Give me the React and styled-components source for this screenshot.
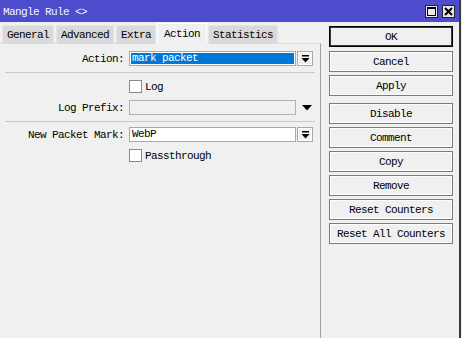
import React from "react";
import styled, { createGlobalStyle } from "styled-components";

const Global = createGlobalStyle`
  html, body {
    margin: 0;
    padding: 0;
    background: #f0f0f0;
  }
  body {
    font-family: "Liberation Mono", "DejaVu Sans Mono", monospace;
    font-size: 11px;
    letter-spacing: -0.6px;
    color: #000;
  }
`;

const Window = styled.div`
  width: 459px;
  height: 338px;
  border-right: 2px solid #3a3a3a;
  background: #f0f0f0;
  display: flex;
  flex-direction: column;
  box-sizing: content-box;
`;

const TitleBar = styled.div`
  height: 22px;
  background: #4c4ccc;
  color: #f4f4ff;
  display: flex;
  align-items: center;
  padding: 0 4px 0 3px;
  gap: 4px;
`;

const Title = styled.div`
  flex: 1;
  padding-top: 1px;
`;

const TitleButton = styled.div`
  width: 13px;
  height: 13px;
  background: #e8e8e8;
  border: 1px solid #222;
  display: flex;
  align-items: center;
  justify-content: center;
  box-sizing: border-box;
`;

const Body = styled.div`
  flex: 1;
  display: flex;
`;

const LeftPane = styled.div`
  width: 321px;
  display: flex;
  flex-direction: column;
`;

const TabBar = styled.div`
  height: 21px;
  display: flex;
  align-items: flex-end;
  gap: 2px;
  padding-left: 2px;
`;

const Tab = styled.div`
  height: ${(p) => (p.$active ? 21 : 18)}px;
  padding: 0 ${(p) => (p.$active ? 6 : 4)}px;
  margin: 0 ${(p) => (p.$active ? -1 : 0)}px ${(p) => (p.$active ? -1 : 0)}px;
  background: ${(p) => (p.$active ? "#f0f0f0" : "#d9d9d9")};
  border: 1px solid ${(p) => (p.$active ? "#fff" : "#e6e6e6")};
  border-bottom: none;
  box-sizing: border-box;
  display: flex;
  align-items: center;
  position: relative;
  z-index: ${(p) => (p.$active ? 1 : 0)};
  white-space: nowrap;
`;

const Panel = styled.div`
  flex: 1;
  border-top: 1px solid #dcdcdc;
  border-right: 1px solid #a0a0a0;
  padding-top: 7px;
  display: flex;
  flex-direction: column;
`;

const Row = styled.div`
  display: flex;
  align-items: center;
  height: ${(p) => p.$h || 15}px;
  margin-top: ${(p) => p.$top || 0}px;
`;

const Label = styled.div`
  width: 129px;
  text-align: right;
  padding-right: 5px;
  box-sizing: border-box;
`;

const Spacer = styled.div`
  width: 129px;
`;

const Field = styled.div`
  width: 167px;
  height: 15px;
  box-sizing: border-box;
  border: 1px solid ${(p) => (p.$disabled ? "#b0b0b0" : "#a8a8a8")};
  background: ${(p) => (p.$disabled ? "#f0f0f0" : "#fff")};
  padding: 0 2px;
  display: flex;
  align-items: center;
  line-height: 13px;
`;

const SelectedField = styled(Field)`
  padding: 1px;
`;

const Selection = styled.div`
  flex: 1;
  height: 100%;
  background: #0078d7;
  color: #fff;
  padding-left: 1px;
  line-height: 11px;
`;

const DropButton = styled.div`
  width: 16px;
  height: 15px;
  margin-left: 1px;
  box-sizing: border-box;
  border: 1px solid #a8a8a8;
  box-shadow: inset 0 0 0 1px #fff;
  background: #f0f0f0;
  display: flex;
  align-items: center;
  justify-content: center;
`;

const PlainArrow = styled.div`
  width: 16px;
  margin-left: 3px;
  display: flex;
  justify-content: center;
`;

const Separator = styled.div`
  height: 1px;
  margin: ${(p) => p.$top}px 5px 0;
  background: #c8c8c8;
`;

const Check = styled.div`
  width: 13px;
  height: 13px;
  box-sizing: border-box;
  border: 1px solid #8a8a8a;
  background: #fff;
  margin-right: 3px;
`;

const RightPane = styled.div`
  flex: 1;
  padding: 4px 0 0 8px;
  display: flex;
  flex-direction: column;
`;

const Button = styled.div`
  width: 124px;
  height: 21px;
  box-sizing: border-box;
  border: 1px solid ${(p) => (p.$primary ? "#000" : "#7a7a7a")};
  box-shadow: inset 0 0 0 1px ${(p) => (p.$primary ? "#3a3a3a" : "#fdfdfd")};
  background: #f0f0f0;
  display: flex;
  align-items: center;
  justify-content: center;
  margin-top: ${(p) => p.$top || 0}px;
`;

const DropIcon = () => (
  <svg width="9" height="8" viewBox="0 0 9 8">
    <rect x="1" y="0" width="7" height="1.5" fill="#000" />
    <path d="M0.5 3 H8.5 L4.5 7.5 Z" fill="#000" />
  </svg>
);

const Triangle = () => (
  <svg width="10" height="6" viewBox="0 0 10 6">
    <path d="M0 0 H10 L5 5.5 Z" fill="#000" />
  </svg>
);

const buttons = [
  ["OK", 0, true],
  ["Cancel", 4],
  ["Apply", 3],
  ["Disable", 7],
  ["Comment", 3],
  ["Copy", 3],
  ["Remove", 3],
  ["Reset Counters", 3],
  ["Reset All Counters", 3],
];

export default function App() {
  return (
    <>
      <Global />
      <Window>
        <TitleBar>
          <Title>Mangle Rule &lt;&gt;</Title>
          <TitleButton>
            <svg width="9" height="9" viewBox="0 0 9 9">
              <rect x="0.5" y="0.5" width="8" height="8" fill="none" stroke="#000" />
              <rect x="0" y="0" width="9" height="2" fill="#000" />
            </svg>
          </TitleButton>
          <TitleButton>
            <svg width="9" height="9" viewBox="0 0 9 9">
              <path d="M1 1 L8 8 M8 1 L1 8" stroke="#000" strokeWidth="2" />
            </svg>
          </TitleButton>
        </TitleBar>
        <Body>
          <LeftPane>
            <TabBar>
              <Tab>General</Tab>
              <Tab>Advanced</Tab>
              <Tab>Extra</Tab>
              <Tab $active>Action</Tab>
              <Tab>Statistics</Tab>
            </TabBar>
            <Panel>
              <Row>
                <Label>Action:</Label>
                <SelectedField>
                  <Selection>mark packet</Selection>
                </SelectedField>
                <DropButton>
                  <DropIcon />
                </DropButton>
              </Row>
              <Separator $top={6} />
              <Row $h={13} $top={7}>
                <Spacer />
                <Check />
                Log
              </Row>
              <Row $top={7}>
                <Label>Log Prefix:</Label>
                <Field $disabled />
                <PlainArrow>
                  <Triangle />
                </PlainArrow>
              </Row>
              <Separator $top={6} />
              <Row $top={5}>
                <Label>New Packet Mark:</Label>
                <Field>WebP</Field>
                <DropButton>
                  <DropIcon />
                </DropButton>
              </Row>
              <Row $h={13} $top={7}>
                <Spacer />
                <Check />
                Passthrough
              </Row>
            </Panel>
          </LeftPane>
          <RightPane>
            {buttons.map(([label, top, primary]) => (
              <Button key={label} $top={top} $primary={primary}>
                {label}
              </Button>
            ))}
          </RightPane>
        </Body>
      </Window>
    </>
  );
}
